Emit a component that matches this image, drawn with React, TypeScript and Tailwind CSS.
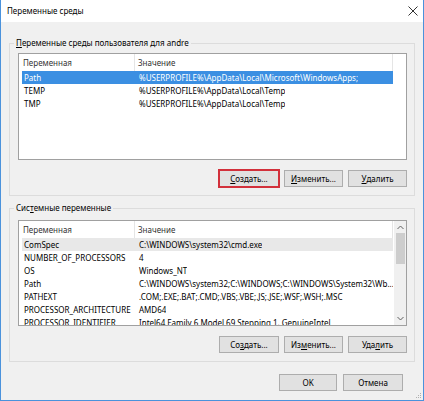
import { ReactNode } from "react";

type EnvVar = { name: string; value: string };

const userVars: EnvVar[] = [
    { name: "Path", value: "%USERPROFILE%\\AppData\\Local\\Microsoft\\WindowsApps;" },
    { name: "TEMP", value: "%USERPROFILE%\\AppData\\Local\\Temp" },
    { name: "TMP", value: "%USERPROFILE%\\AppData\\Local\\Temp" },
];

const systemVars: EnvVar[] = [
    { name: "ComSpec", value: "C:\\WINDOWS\\system32\\cmd.exe" },
    { name: "NUMBER_OF_PROCESSORS", value: "4" },
    { name: "OS", value: "Windows_NT" },
    { name: "Path", value: "C:\\WINDOWS\\system32;C:\\WINDOWS;C:\\WINDOWS\\System32\\Wb..." },
    { name: "PATHEXT", value: ".COM;.EXE;.BAT;.CMD;.VBS;.VBE;.JS;.JSE;.WSF;.WSH;.MSC" },
    { name: "PROCESSOR_ARCHITECTURE", value: "AMD64" },
    { name: "PROCESSOR_IDENTIFIER", value: "Intel64 Family 6 Model 69 Stepping 1, GenuineIntel" },
];

// label with one underlined access-key letter
function Mnemonic({ text, at }: { text: string; at: number }) {
    return (
        <>
            {text.slice(0, at)}
            <span className="underline underline-offset-[1px]">{text[at]}</span>
            {text.slice(at + 1)}
        </>
    );
}

function Button({ children, className = "" }: { children: ReactNode; className?: string }) {
    return (
        <button
            className={
                "h-[17px] flex items-center justify-center bg-[#e1e1e1] border border-[#adadad] text-[8px] leading-none text-black " +
                className
            }
        >
            {children}
        </button>
    );
}

function VarList({
    vars,
    selected,
    faint,
    scroll,
    height,
}: {
    vars: EnvVar[];
    selected?: number;
    faint?: number;
    scroll?: boolean;
    height: string;
}) {
    return (
        <div className={"flex bg-white border border-[#a0a0a0] overflow-hidden " + height}>
            <div className="flex-1 flex flex-col min-w-0">
                <div className="flex h-[17px] shrink-0 text-[#333]">
                    <div className="w-[116px] pl-[4px] flex items-center border-r border-[#e5e5e5]">Переменная</div>
                    <div className="w-[258px] pl-[3px] flex items-center border-r border-[#e5e5e5]">Значение</div>
                </div>
                {vars.map((v, i) => (
                    <div
                        key={v.name}
                        className={
                            "flex h-[13px] shrink-0 items-center ml-[3px] w-[371px] whitespace-nowrap " +
                            (i === selected ? "bg-[#3b8fe2] text-white " : "") +
                            (i === faint ? "bg-[#e8e8e8] " : "")
                        }
                    >
                        <span className="w-[113px] pl-[2px] shrink-0">{v.name}</span>
                        <span className="pl-[4px] overflow-hidden">{v.value}</span>
                    </div>
                ))}
            </div>
            {scroll && (
                <div className="w-[12px] bg-[#f0f0f0] flex flex-col items-center">
                    <svg width="7" height="5" viewBox="0 0 7 5" className="mt-[4px]">
                        <path d="M0.5 4 L3.5 1 L6.5 4" fill="none" stroke="#606060" strokeWidth="1" />
                    </svg>
                    <div className="w-[9px] h-[31px] bg-[#cdcdcd] mt-[3px]" />
                    <div className="flex-1" />
                    <svg width="7" height="5" viewBox="0 0 7 5" className="mb-[4px]">
                        <path d="M0.5 1 L3.5 4 L6.5 1" fill="none" stroke="#606060" strokeWidth="1" />
                    </svg>
                </div>
            )}
        </div>
    );
}

function Group({ label, children, className = "" }: { label: ReactNode; children: ReactNode; className?: string }) {
    return (
        <fieldset className={"border border-[#dcdcdc] pl-[8px] pr-[7px] pb-[8px] " + className}>
            <legend className="-ml-[4px] px-[2px] leading-[14px] text-black">{label}</legend>
            {children}
        </fieldset>
    );
}

export default function App() {
    return (
        <div className="relative w-[424px] h-[401px] flex flex-col bg-[#f0f0f0] border-x border-b border-[#4a92dc] font-['Noto_Sans',sans-serif] text-[8px] text-black">
            <div className="h-[22px] bg-white flex items-center justify-between pl-[6px] pr-[5px] shrink-0">
                <span className="text-[8px]">Переменные среды</span>
                <svg width="10" height="10" viewBox="0 0 10 10">
                    <path d="M0.5 0.5 L9.5 9.5 M9.5 0.5 L0.5 9.5" stroke="#333" strokeWidth="1" />
                </svg>
            </div>

            <div className="flex-1 flex flex-col px-[8px]">
                <Group className="mt-[14px] pt-[3px]" label={<Mnemonic text="Переменные среды пользователя для andre" at={0} />}>
                    <VarList vars={userVars} selected={0} height="h-[107px]" />
                    <div className="flex justify-end gap-[5px] mt-[10px]">
                        <Button className="w-[62px] border-2 border-[#d2303b] -my-[1px] h-[19px] -mr-[1px]">
                            <Mnemonic text="Создать..." at={0} />
                        </Button>
                        <Button className="w-[59px]">
                            <Mnemonic text="Изменить..." at={0} />
                        </Button>
                        <Button className="w-[59px]">
                            <Mnemonic text="Удалить" at={0} />
                        </Button>
                    </div>
                </Group>

                <Group className="mt-[5px] pt-[5px]" label={<Mnemonic text="Системные переменные" at={3} />}>
                    <VarList vars={systemVars} faint={0} scroll height="h-[106px]" />
                    <div className="flex justify-end gap-[5px] mt-[10px]">
                        <Button className="w-[60px]">
                            <Mnemonic text="Создать..." at={2} />
                        </Button>
                        <Button className="w-[59px]">
                            <Mnemonic text="Изменить..." at={2} />
                        </Button>
                        <Button className="w-[59px]">
                            <Mnemonic text="Удалить" at={3} />
                        </Button>
                    </div>
                </Group>

                <div className="flex justify-end gap-[6px] mt-[12px] mr-[12px]">
                    <Button className="w-[58px] border-[#0078d7]">OK</Button>
                    <Button className="w-[60px]">Отмена</Button>
                </div>
            </div>

            {/* size grip */}
            <svg width="6" height="6" viewBox="0 0 6 6" className="absolute right-[1px] bottom-[1px]">
                <rect x="4" y="0" width="1" height="1" fill="#b0b0b0" />
                <rect x="2" y="2" width="1" height="1" fill="#b0b0b0" />
                <rect x="4" y="2" width="1" height="1" fill="#b0b0b0" />
                <rect x="0" y="4" width="1" height="1" fill="#b0b0b0" />
                <rect x="2" y="4" width="1" height="1" fill="#b0b0b0" />
                <rect x="4" y="4" width="1" height="1" fill="#b0b0b0" />
            </svg>
        </div>
    );
}
